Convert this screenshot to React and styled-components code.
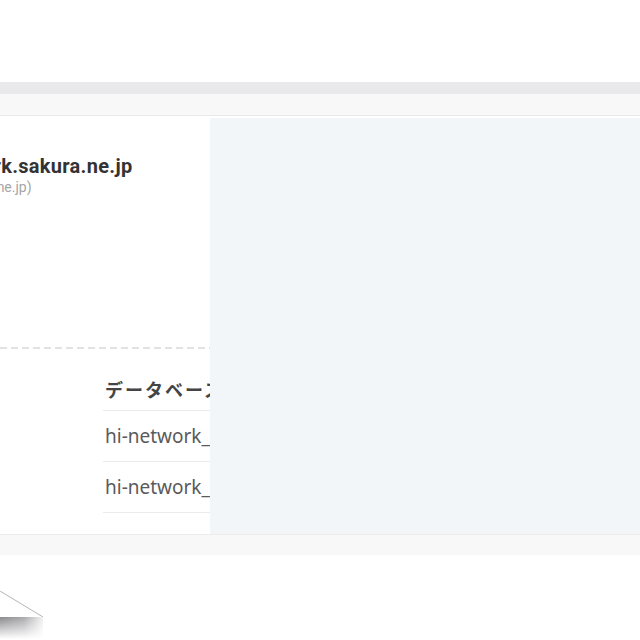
import React from 'react'
import styled, { createGlobalStyle } from 'styled-components'

const GlobalStyle = createGlobalStyle`
  html, body {
    margin: 0;
    padding: 0;
    background: #fff;
    font-family: Roboto, "Noto Sans CJK JP", sans-serif;
  }
`;

const Page = styled.div`
  width: 640px;
  height: 640px;
  overflow: hidden;
  display: flex;
  flex-direction: column;
  padding-top: 82px;
  box-sizing: border-box;
`;

const TopBar = styled.div`
  height: 12px;
  background: #e9e9eb;
  flex-shrink: 0;
`;

const SubBar = styled.div`
  height: 21px;
  background: #f8f8f8;
  border-bottom: 1px solid #e9e9e9;
  flex-shrink: 0;
`;

const Card = styled.div`
  display: flex;
  height: 418px;
  border-bottom: 1px solid #ececec;
  flex-shrink: 0;
`;

const LeftCol = styled.div`
  width: 210px;
  flex-shrink: 0;
  overflow: hidden;
  background: #fff;
  padding-top: 38px;
  box-sizing: border-box;
`;

const RightCol = styled.div`
  flex: 1;
  margin-top: 2px;
  background: #f3f6f9;
`;

const Header = styled.div`
  margin-left: -88px;
  white-space: nowrap;
  height: 193px;
`;

const Title = styled.div`
  font-family: Roboto, "Noto Sans CJK JP", sans-serif;
  font-weight: 700;
  font-size: 20px;
  letter-spacing: 0.3px;
  line-height: 24px;
  color: #333;
`;

const Sub = styled.div`
  font-family: Roboto, sans-serif;
  font-size: 14px;
  line-height: 19px;
  color: #a5a5a5;
`;

const Dashed = styled.div`
  height: 2px;
  background: repeating-linear-gradient(90deg, #e2e2e2 0 7px, transparent 7px 11px);
`;

const Table = styled.div`
  margin-left: 103px;
  margin-top: 23px;
  width: 260px;
  white-space: nowrap;
`;

const HeadCell = styled.div`
  font-family: "Noto Sans CJK JP", sans-serif;
  font-weight: 700;
  font-size: 18px;
  letter-spacing: 2px;
  color: #444;
  height: 38px;
  line-height: 34px;
  padding-left: 2px;
  border-bottom: 1px solid #ebebeb;
`;

const Row = styled.div`
  font-family: "Noto Sans", sans-serif;
  font-size: 19px;
  color: #5a5a5a;
  height: 50px;
  line-height: 50px;
  padding-left: 2px;
  border-bottom: 1px solid #ebebeb;
`;

const FooterBar = styled.div`
  height: 20px;
  background: #f8f8f8;
  flex-shrink: 0;
`;

const Bottom = styled.div`
  flex: 1;
  padding-top: 36px;
`;

const Curl = () => (
  <svg width="48" height="50" viewBox="0 0 48 50">
    <defs>
      <linearGradient id="gh" x1="0" y1="0" x2="1" y2="0">
        <stop offset="0" stopColor="#8a8a8e" />
        <stop offset="0.55" stopColor="#a9a9ac" />
        <stop offset="1" stopColor="#f2f2f2" />
      </linearGradient>
      <linearGradient id="gv" x1="0" y1="0" x2="0" y2="1">
        <stop offset="0" stopColor="#fff" stopOpacity="0" />
        <stop offset="1" stopColor="#fff" stopOpacity="1" />
      </linearGradient>
    </defs>
    <line x1="0" y1="0" x2="43" y2="26" stroke="#b5b5b5" strokeWidth="1" />
    <rect x="0" y="26" width="43" height="22" fill="url(#gh)" />
    <rect x="0" y="26" width="43" height="22" fill="url(#gv)" />
  </svg>
);

export default function App() {
  return (
    <>
      <GlobalStyle />
      <Page>
        <TopBar />
        <SubBar />
        <Card>
          <LeftCol>
            <Header>
              <Title>hi-network.sakura.ne.jp</Title>
              <Sub>(www.sakura.ne.jp)</Sub>
            </Header>
            <Dashed />
            <Table>
              <HeadCell>データベース名</HeadCell>
              <Row>hi-network_db01</Row>
              <Row>hi-network_db02</Row>
            </Table>
          </LeftCol>
          <RightCol />
        </Card>
        <FooterBar />
        <Bottom>
          <Curl />
        </Bottom>
      </Page>
    </>
  );
}
